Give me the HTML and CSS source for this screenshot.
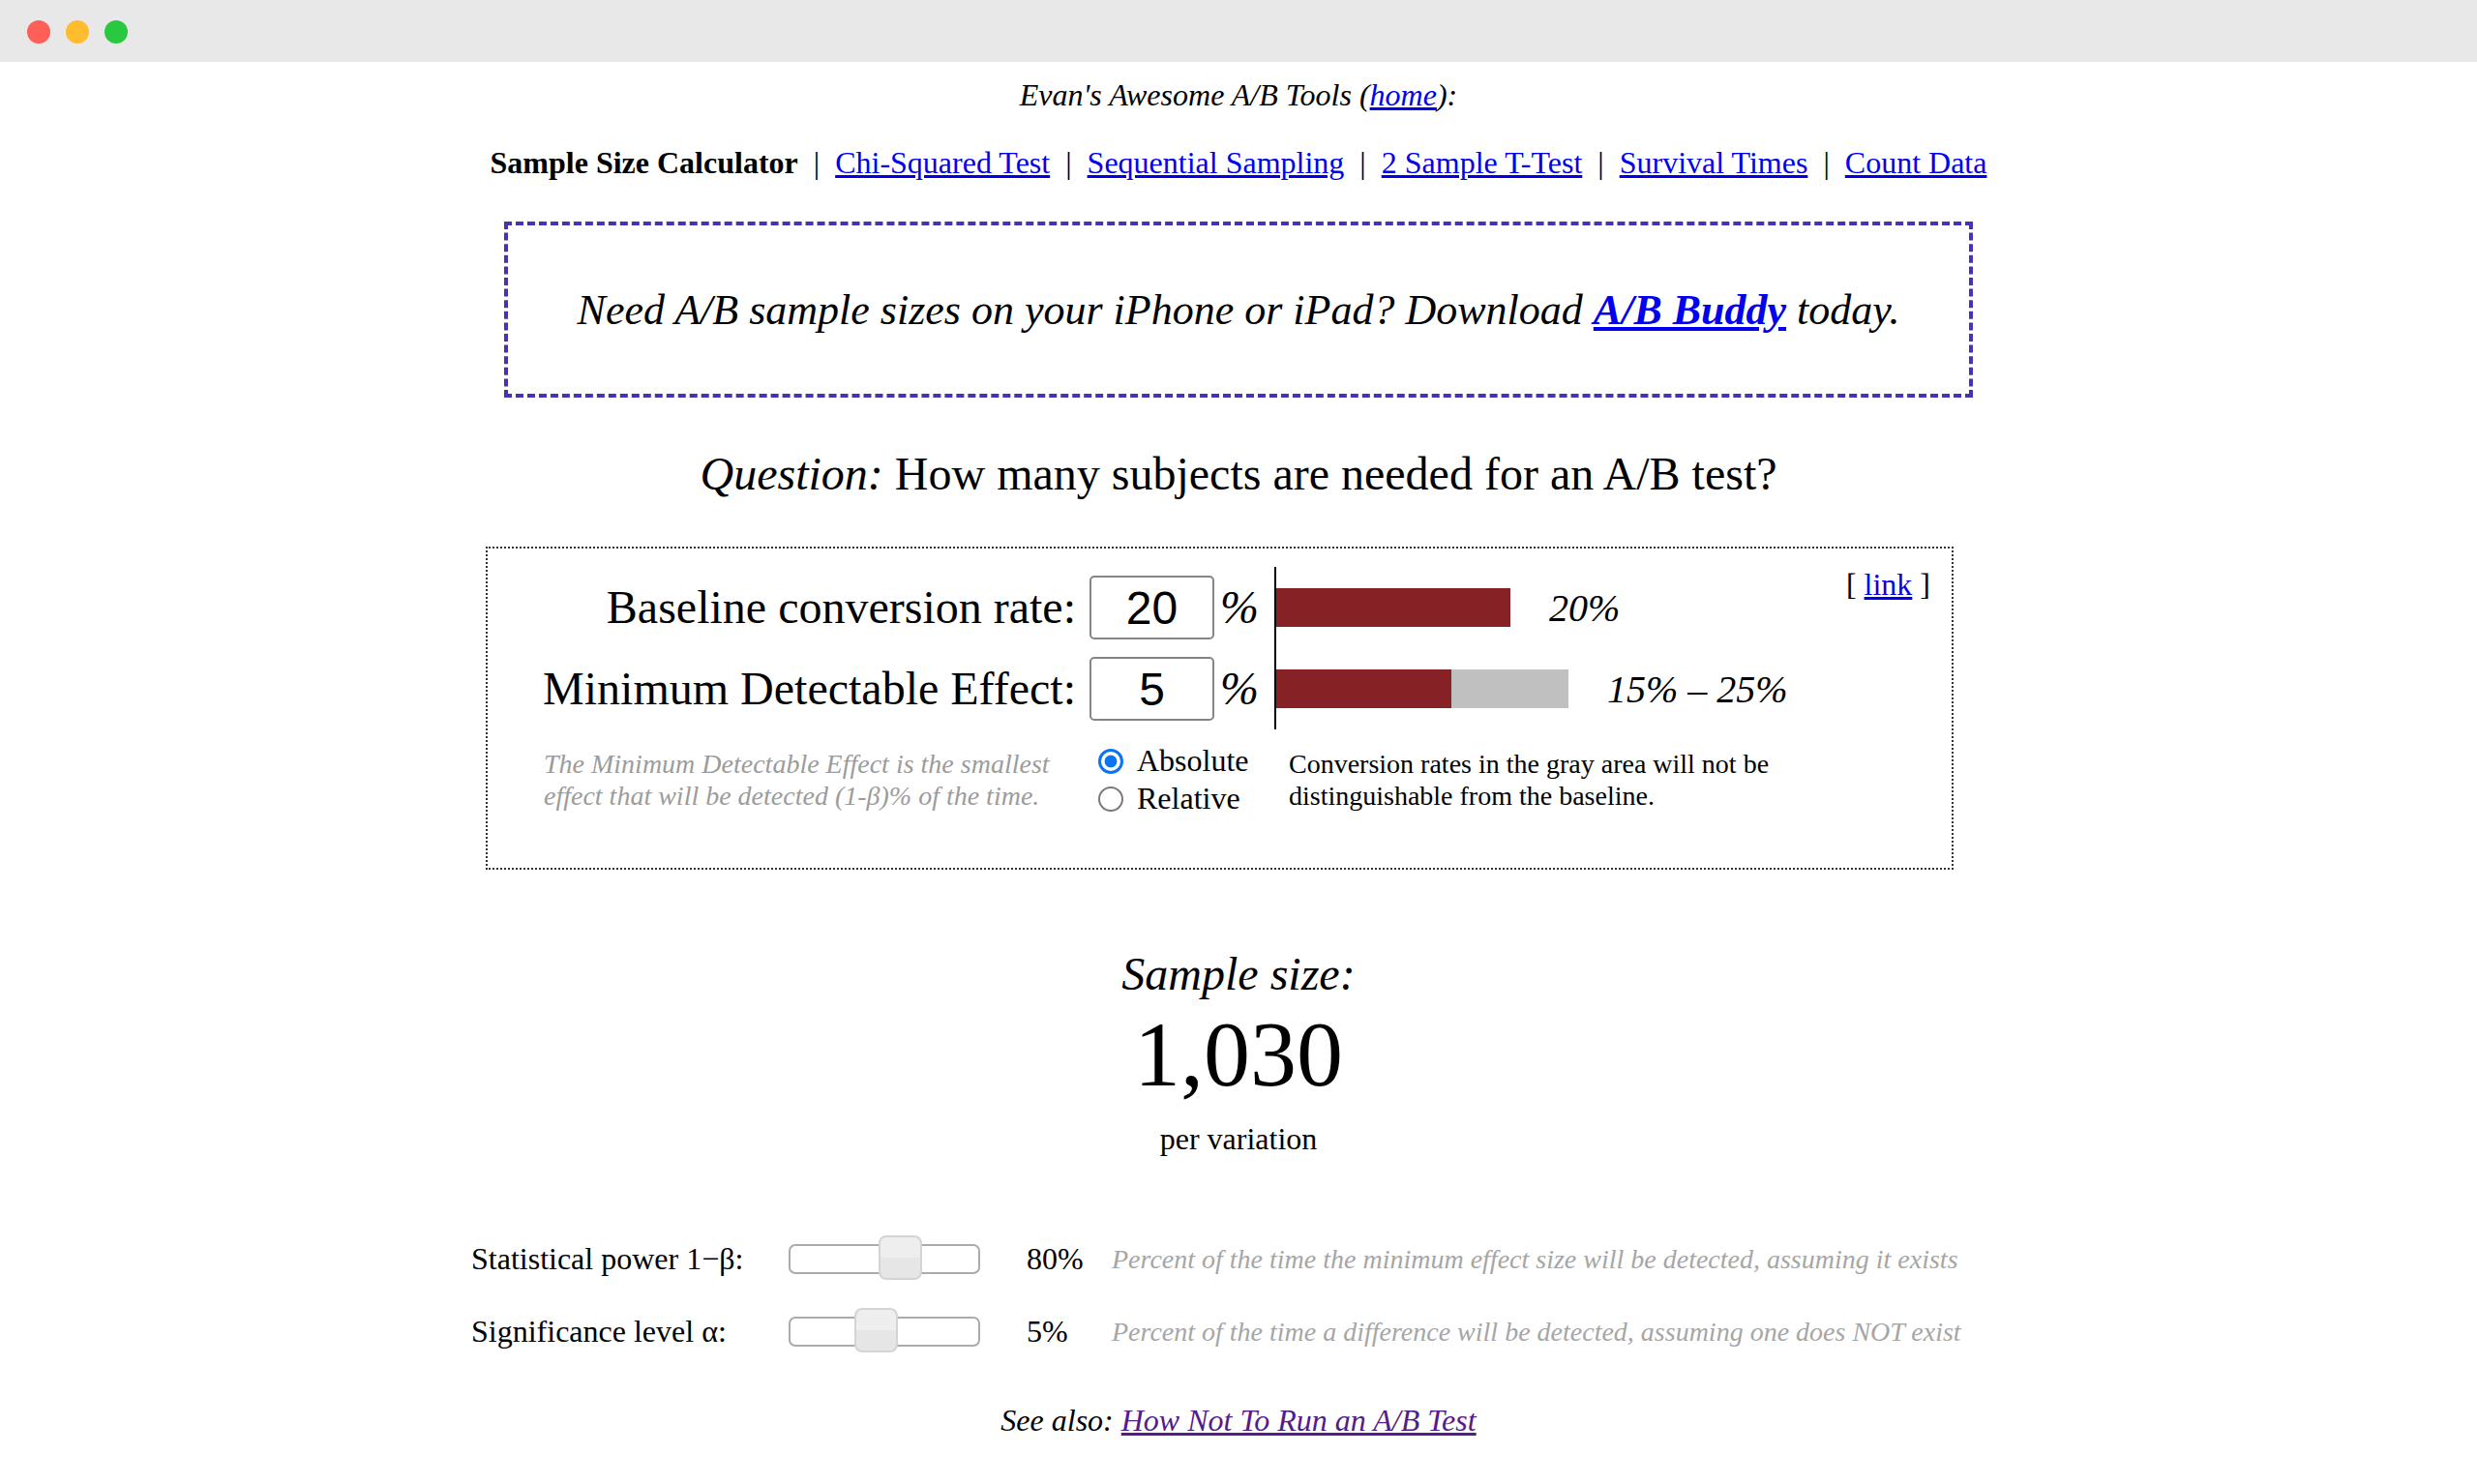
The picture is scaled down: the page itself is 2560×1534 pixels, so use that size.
FILE: index.html
```html
<!DOCTYPE html>
<html>
<head>
    <title>Sample Size Calculator</title>
    <link rel="stylesheet" href="styles.css">
</head>
<body>
    <div class="titlebar">
        <span class="dot red"></span>
        <span class="dot yellow"></span>
        <span class="dot green"></span>
    </div>

    <div class="main">
        <p class="tools-title">Evan's Awesome A/B Tools (<a href="#">home</a>):</p>

        <nav class="tools-nav">
            <b>Sample Size Calculator</b>
            <span class="sep">|</span>
            <a href="#">Chi-Squared Test</a>
            <span class="sep">|</span>
            <a href="#">Sequential Sampling</a>
            <span class="sep">|</span>
            <a href="#">2 Sample T-Test</a>
            <span class="sep">|</span>
            <a href="#">Survival Times</a>
            <span class="sep">|</span>
            <a href="#">Count Data</a>
        </nav>

        <div class="promo">
            <em>Need A/B sample sizes on your iPhone or iPad? Download <a href="#"><b>A/B Buddy</b></a> today.</em>
        </div>

        <h2 class="question"><em>Question:</em> How many subjects are needed for an A/B test?</h2>

        <div class="calc">
            <label class="label" for="baseline">Baseline conversion rate:</label>
            <input class="num" id="baseline" type="text" value="20">
            <span class="pct">%</span>
            <div class="bars">
                <div class="fill" style="width: 242px"></div>
                <span class="bar-label">20%</span>
            </div>
            <span class="link-cell">[ <a href="#">link</a> ]</span>

            <label class="label" for="mde">Minimum Detectable Effect:</label>
            <input class="num" id="mde" type="text" value="5">
            <span class="pct">%</span>
            <div class="bars">
                <div class="fill" style="width: 181px"></div>
                <div class="fill gray" style="width: 121px"></div>
                <span class="bar-label">15% &ndash; 25%</span>
            </div>

            <p class="note">The Minimum Detectable Effect is the smallest effect that will be detected (1-&beta;)% of the time.</p>
            <div class="modes">
                <label><input type="radio" name="mode" checked> Absolute</label>
                <label><input type="radio" name="mode"> Relative</label>
            </div>
            <p class="explain">Conversion rates in the gray area will not be distinguishable from the baseline.</p>
        </div>

        <div class="result">
            <p class="result-head">Sample size:</p>
            <p class="result-num">1,030</p>
            <p class="result-unit">per variation</p>
        </div>

        <div class="params">
            <span>Statistical power 1&minus;&beta;:</span>
            <div class="slider"><span class="handle" style="left: 91px"></span></div>
            <span></span>
            <span>80%</span>
            <span class="hint">Percent of the time the minimum effect size will be detected, assuming it exists</span>

            <span>Significance level &alpha;:</span>
            <div class="slider"><span class="handle" style="left: 66px"></span></div>
            <span></span>
            <span>5%</span>
            <span class="hint">Percent of the time a difference will be detected, assuming one does NOT exist</span>
        </div>

        <p class="see-also">See also: <a href="#" class="visited">How Not To Run an A/B Test</a></p>
    </div>
</body>
</html>
```

FILE: styles.css
```css
body {
    margin: 0;
    font-family: "Liberation Serif", "Times New Roman", serif;
    font-size: 32px;
    color: #000;
    background-color: #fff;
}

a {
    color: #0000ee;
}

a.visited {
    color: #551a8b;
}

/* window chrome */
.titlebar {
    height: 64px;
    background-color: #e8e8e8;
    display: flex;
    align-items: center;
    gap: 16px;
    padding: 2px 0 0 28px;
    box-sizing: border-box;
}

.dot {
    width: 24px;
    height: 24px;
    border-radius: 50%;
}

.red { background-color: #ff5f57; }
.yellow { background-color: #febc2e; }
.green { background-color: #28c840; }

.main {
    width: 1586px;
    margin: 0 auto;
    text-align: center;
}

.tools-title {
    margin: 14px 0 0;
    line-height: 40px;
    font-style: italic;
}

.tools-nav {
    margin-top: 30px;
    line-height: 40px;
    display: flex;
    justify-content: center;
}

.tools-nav .sep {
    padding: 0 16px;
}

.promo {
    width: 1518px;
    height: 182px;
    box-sizing: border-box;
    margin: 41px auto 0;
    border: 4px dashed #4434b4;
    display: flex;
    align-items: center;
    justify-content: center;
    font-size: 44px;
}

.question {
    margin: 51px 0 0;
    font-size: 48px;
    line-height: 56px;
    font-weight: normal;
}

/* calculator box */
.calc {
    width: 1517px;
    box-sizing: border-box;
    margin: 47px 0 0 15px;
    border: 2px dotted #333;
    padding: 19px 22px 52px 38px;
    display: grid;
    grid-template-columns: 584px 132px 59px 1fr auto;
    grid-template-rows: 84px 84px auto;
    text-align: left;
}

.calc .label {
    font-size: 48px;
    line-height: 56px;
    white-space: nowrap;
    text-align: right;
    padding-right: 14px;
    align-self: center;
}

.calc .num {
    width: 129px;
    height: 66px;
    box-sizing: border-box;
    padding: 0;
    border: 2px solid #858585;
    border-radius: 5px;
    font: 48px "Liberation Sans", Arial, sans-serif;
    text-align: center;
    align-self: center;
}

.pct {
    font-size: 48px;
    font-style: italic;
    line-height: 56px;
    padding-left: 3px;
    align-self: center;
}

.bars {
    border-left: 2px solid #000;
    display: flex;
    align-items: center;
}

.fill {
    height: 40px;
    background-color: #862226;
}

.fill.gray {
    background-color: #c0c0c0;
}

.bar-label {
    margin-left: 40px;
    font-size: 40px;
    font-style: italic;
}

.link-cell {
    grid-row: 1;
    grid-column: 5;
    align-self: start;
    line-height: 37px;
}

.note {
    grid-column: 1;
    margin: 0;
    padding: 19px 14px 0 20px;
    font-size: 28px;
    line-height: 33px;
    font-style: italic;
    color: #9c9c9c;
}

.modes {
    grid-column: 2 / 4;
    padding: 13px 0 0 9px;
}

.modes label {
    display: flex;
    align-items: center;
    gap: 14px;
    height: 39px;
}

.modes input {
    appearance: none;
    width: 26px;
    height: 26px;
    margin: 0;
    border: 2px solid #7a7a7a;
    border-radius: 50%;
    background-color: #fff;
}

.modes input:checked {
    border: 3px solid #0b74f4;
    background: radial-gradient(circle, #0b74f4 0 42%, #fff 48%);
}

.explain {
    grid-column: 4 / 6;
    margin: 0;
    padding: 19px 0 0 15px;
    max-width: 560px;
    font-size: 28px;
    line-height: 33px;
}

/* result */
.result-head {
    margin: 80px 0 0;
    font-size: 48px;
    line-height: 56px;
    font-style: italic;
}

.result-num {
    margin: 5px 0 0;
    font-size: 96px;
    line-height: 100px;
}

.result-unit {
    margin: 17px 0 0;
    line-height: 40px;
}

/* power / significance sliders */
.params {
    margin-top: 67px;
    display: grid;
    grid-template-columns: 328px 198px 48px 88px auto;
    grid-auto-rows: 75px;
    align-items: center;
    text-align: left;
}

.slider {
    position: relative;
    height: 31px;
    box-sizing: border-box;
    border: 2px solid #ababab;
    border-radius: 7px;
    background-color: #fff;
}

.handle {
    position: absolute;
    top: -11px;
    width: 45px;
    height: 46px;
    box-sizing: border-box;
    border: 2px solid #d4d4d4;
    border-radius: 8px;
    background: linear-gradient(#eeeeee 50%, #e6e6e6 50%);
}

.hint {
    font-size: 28px;
    font-style: italic;
    color: #a6a6a6;
}

.see-also {
    margin: 34px 0 0;
    line-height: 40px;
    font-style: italic;
}
```
